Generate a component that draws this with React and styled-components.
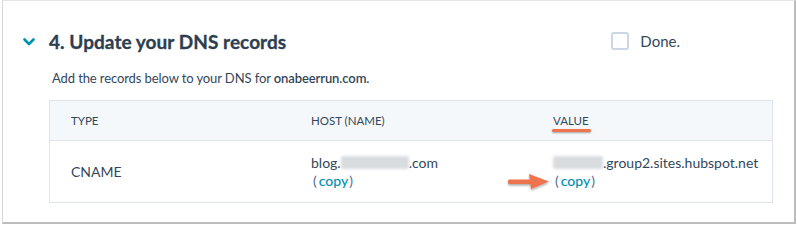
import React from "react";
import styled, { createGlobalStyle } from "styled-components";

const Global = createGlobalStyle`
  html, body { margin: 0; padding: 0; background: #fff; }
  body { font-family: Lato, "Open Sans", sans-serif; color: #33475b; }
`;

const Card = styled.section`
  box-sizing: border-box;
  margin-left: 2px;
  width: 794px;
  height: 224px;
  border-top: 1px solid #e6e6e6;
  border-left: 1px solid #d8d8d8;
  border-right: 2px solid #bdbdbd;
  border-bottom: 2px solid #bdbdbd;
  background: #fff;
  padding: 22px 21px 0 20px;
`;

const HeaderRow = styled.div`
  display: flex;
  align-items: center;
  height: 36px;
`;

const Chevron = styled.svg`
  width: 12px;
  height: 8px;
  flex: none;
  margin-right: 14px;
  margin-top: 1px;
`;

const Title = styled.h2`
  margin: 0;
  font-size: 19px;
  font-weight: 700;
  color: #2d3e50;
  flex: 1;
  letter-spacing: 0.05px;
  -webkit-text-stroke: 0.3px #2d3e50;
`;

const DoneLabel = styled.label`
  display: flex;
  align-items: center;
  gap: 11px;
  font-size: 15px;
  color: #33475b;
  margin-right: 93px;
`;

const Box = styled.span`
  box-sizing: border-box;
  width: 18px;
  height: 18px;
  border: 2px solid #cbd6e2;
  border-radius: 3px;
  background: #fff;
`;

const Intro = styled.p`
  margin: 10px 0 0 29px;
  font-size: 13px;
  line-height: 18px;
  letter-spacing: -0.1px;
  color: #33475b;
  b { font-weight: 600; }
`;

const Table = styled.div`
  box-sizing: border-box;
  margin: 13px 0 0 26px;
  width: 724px;
  border: 1px solid #dfe3eb;
`;

const Row = styled.div`
  display: grid;
  grid-template-columns: 240px 242px 1fr;
  align-items: center;
  background: ${(p) => (p.$head ? "#f5f8fa" : "#fff")};
  border-bottom: ${(p) => (p.$head ? "1px solid #dfe3eb" : "none")};
  height: ${(p) => (p.$head ? "39px" : "61px")};
`;

const Cell = styled.div`
  padding-left: 21px;
  font-size: ${(p) => (p.$head ? "11.5px" : "14px")};
  line-height: 18px;
  color: #33475b;
  position: relative;
`;

const Marked = styled.span`
  position: relative;
  &::after {
    content: "";
    position: absolute;
    left: -1px;
    right: -2px;
    bottom: -5px;
    height: 3px;
    border-radius: 2px;
    background: #f0734f;
    box-shadow: 0 1px 2px rgba(0, 0, 0, 0.35);
  }
`;

const Blur = styled.span`
  display: inline-block;
  width: ${(p) => p.$w}px;
  height: 13px;
  vertical-align: -1px;
  background: #d9dcdf;
  filter: blur(1.5px);
  border-radius: 2px;
`;

const Copy = styled.div`
  font-size: 14px;
  color: #506e91;
  padding-left: 2px;
  a { color: #0091ae; text-decoration: none; font-weight: 500; margin: 0 1px 0 2px; }
`;

const Arrow = styled.svg`
  position: absolute;
  left: -25px;
  top: 18px;
  width: 44px;
  height: 20px;
`;

export default function App() {
  return (
    <>
      <Global />
      <Card>
        <HeaderRow>
          <Chevron viewBox="0 0 12 8">
            <path d="M1.5 1.5 L6 6 L10.5 1.5" fill="none" stroke="#0091ae" strokeWidth="2.6" strokeLinecap="round" strokeLinejoin="round" />
          </Chevron>
          <Title>4. Update your DNS records</Title>
          <DoneLabel>
            <Box />
            Done.
          </DoneLabel>
        </HeaderRow>
        <Intro>
          Add the records below to your DNS for <b>onabeerrun.com.</b>
        </Intro>
        <Table>
          <Row $head>
            <Cell $head>TYPE</Cell>
            <Cell $head>HOST (NAME)</Cell>
            <Cell $head><Marked>VALUE</Marked></Cell>
          </Row>
          <Row>
            <Cell>CNAME</Cell>
            <Cell>
              <div>blog.<Blur $w={68} />.com</div>
              <Copy>(<a href="#">copy</a>)</Copy>
            </Cell>
            <Cell>
              <div><Blur $w={50} />.group2.sites.hubspot.net</div>
              <Copy>(<a href="#">copy</a>)</Copy>
              <Arrow viewBox="0 0 44 20">
                <defs>
                  <filter id="sh" x="-20%" y="-40%" width="140%" height="180%">
                    <feDropShadow dx="0" dy="1.5" stdDeviation="1" floodColor="#000" floodOpacity="0.35" />
                  </filter>
                </defs>
                <g filter="url(#sh)">
                  <rect x="1" y="7.5" width="25" height="4.5" rx="1.5" fill="#f0734f" />
                  <path d="M22 2 L42 9.5 L24 17 Z" fill="#f0734f" />
                </g>
              </Arrow>
            </Cell>
          </Row>
        </Table>
      </Card>
    </>
  );
}
